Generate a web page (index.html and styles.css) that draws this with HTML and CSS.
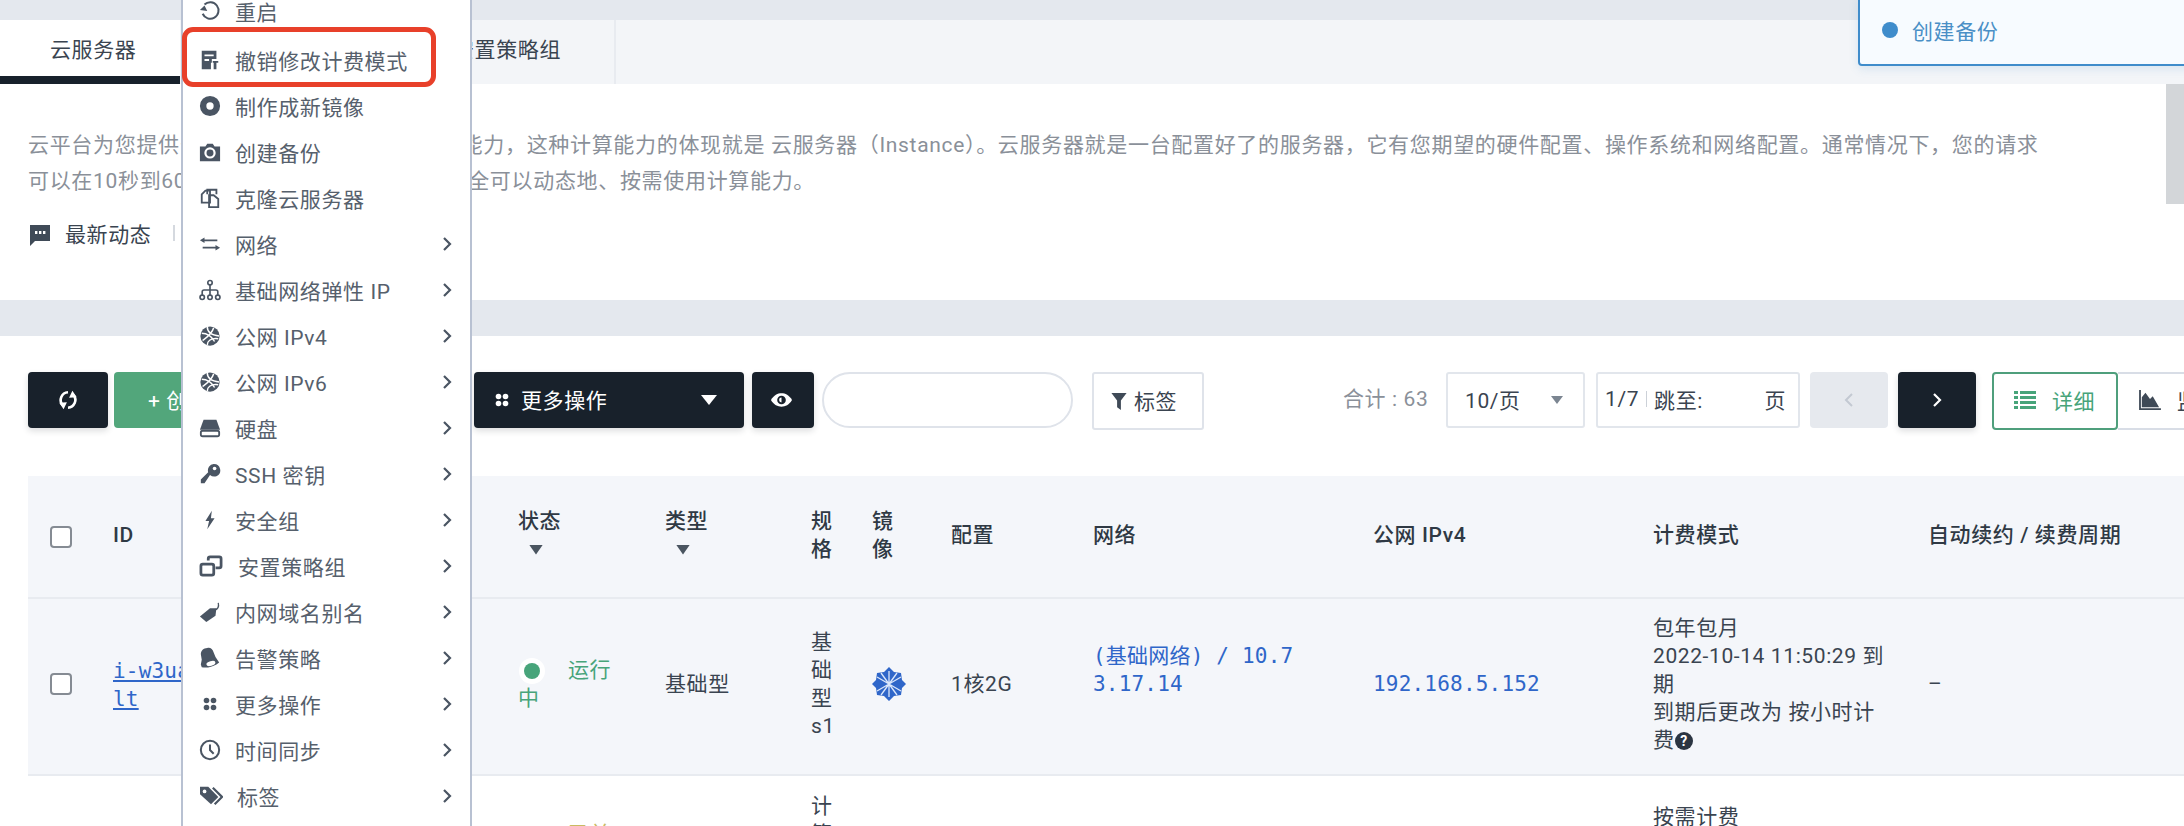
FILE: index.html
```html
<!DOCTYPE html>
<html lang="zh">
<head>
<meta charset="utf-8">
<title>云服务器</title>
<link rel="stylesheet" href="styles.css">
</head>
<body>
<svg class="defs" width="0" height="0" aria-hidden="true">
  <symbol id="i-chev" viewBox="0 0 12 16"><path d="M3 2l6 6-6 6" fill="none" stroke="currentColor" stroke-width="2.2"/></symbol>
  <symbol id="i-globe" viewBox="0 0 24 24"><circle cx="12" cy="12" r="10.5" fill="currentColor"/><path d="M3 9c5 0 10 2 14 9M9 2c0 5 3 9 13 10M4 17c4-3 10-7 12-14M9 22c0-4 3-8 12-7" fill="none" stroke="#fff" stroke-width="1.6"/></symbol>
  <symbol id="i-dots" viewBox="0 0 16 16"><g fill="currentColor"><circle cx="4" cy="4" r="3.2"/><circle cx="12" cy="4" r="3.2"/><circle cx="4" cy="12" r="3.2"/><circle cx="12" cy="12" r="3.2"/></g></symbol>
</svg>

<header class="topbar"></header>
<nav class="tabs">
  <div class="tab tab-active">云服务器</div>
  <div class="tab tab-b"></div>
  <div class="tab tab-c">安置策略组</div>
</nav>

<section class="intro">
  <p class="intro-text">云平台为您提供安全可靠、弹性可扩展的计算能力，这种计算能力的体现就是 云服务器（Instance）。云服务器就是一台配置好了的服务器，它有您期望的硬件配置、操作系统和网络配置。通常情况下，您的请求<br>可以在10秒到60秒内创建或启动实例，让您完全可以动态地、按需使用计算能力。</p>
  <div class="news">
    <svg class="news-icon" viewBox="0 0 20 22"><path d="M0 1h20v16H5l-5 5z" fill="#3f4a57"/><g fill="#fff"><rect x="5" y="7" width="2.4" height="3"/><rect x="9" y="7" width="2.4" height="3"/><rect x="13" y="7" width="2.4" height="3"/></g></svg>
    <span class="news-label">最新动态</span>
    <span class="news-sep"></span>
  </div>
  <div class="scrollbar"></div>
</section>
<div class="band"></div>

<section class="toolbar">
  <button class="btn btn-dark btn-refresh"><svg class="ic20" viewBox="0 0 20 20"><path d="M10 3A7 7 0 0 0 5 14.500M10 17a7 7 0 0 0 5-11.500" fill="none" stroke="#fff" stroke-width="2.400"/><path d="M2 12.500L9 12l-3 6.500zM18 7.500L11 8l3-6.500z" fill="#fff"/></svg></button>
  <button class="btn btn-green">+ 创建</button>
  <button class="btn btn-dark btn-more"><svg class="ic14" viewBox="0 0 16 16"><use href="#i-dots"/></svg><span class="more-label">更多操作</span><span class="caret caret-white"></span></button>
  <button class="btn btn-dark btn-eye"><svg class="ic-eye" viewBox="0 0 24 16"><path d="M1 8c3-5 7-7 11-7s8 2 11 7c-3 5-7 7-11 7S4 13 1 8z" fill="#fff"/><circle cx="12" cy="8" r="4.500" fill="#18212b"/><path d="M12 5.500a2.500 2.500 0 0 0 0 5z" fill="#fff"/></svg></button>
  <div class="search"></div>
  <button class="btn-tag"><svg class="ic-funnel" viewBox="0 0 16 20"><path d="M0 1h16l-6 8v10l-4-3V9z" fill="#3f4a57"/></svg>标签</button>
  <div class="total">合计 : 63</div>
  <div class="select">10/页<span class="caret caret-gray"></span></div>
  <div class="jump"><span>1/7</span><i class="jump-sep"></i><span class="jump-to">跳至:</span><span class="jump-page">页</span></div>
  <button class="btn btn-prev"><svg class="ic-pg" viewBox="0 0 12 16"><path d="M9 2L3 8l6 6" fill="none" stroke="#c3c9d2" stroke-width="2"/></svg></button>
  <button class="btn btn-dark btn-next"><svg class="ic-pg" viewBox="0 0 12 16"><path d="M3 2l6 6-6 6" fill="none" stroke="#fff" stroke-width="2.200"/></svg></button>
  <button class="view view-on"><svg class="ic-list" viewBox="0 0 22 18"><g fill="#47a47a"><rect width="4" height="3"/><rect x="6" width="16" height="3"/><rect y="5" width="4" height="3"/><rect x="6" y="5" width="16" height="3"/><rect y="10" width="4" height="3"/><rect x="6" y="10" width="16" height="3"/><rect y="15" width="4" height="3"/><rect x="6" y="15" width="16" height="3"/></g></svg>详细</button>
  <button class="view view-off"><svg class="ic-list" viewBox="0 0 24 22"><path d="M0 0h2v20h22v2H0z" fill="#3f4a57"/><path d="M3 19V8l4-5 5 7 3-3 7 12z" fill="#3f4a57"/></svg>监控</button>
</section>

<table class="grid">
  <colgroup>
    <col class="c-check"><col class="c-id"><col class="c-status"><col class="c-type"><col class="c-spec"><col class="c-image"><col class="c-conf"><col class="c-net"><col class="c-ip"><col class="c-bill"><col class="c-renew">
  </colgroup>
  <thead>
    <tr>
      <th class="check"><span class="box"></span></th>
      <th>ID</th>
      <th>状态<span class="sort"></span></th>
      <th>类型<span class="sort"></span></th>
      <th class="narrow">规格</th>
      <th class="narrow">镜像</th>
      <th>配置</th>
      <th>网络</th>
      <th>公网 IPv4</th>
      <th>计费模式</th>
      <th>自动续约 / 续费周期</th>
    </tr>
  </thead>
  <tbody>
    <tr class="row-a">
      <td class="check"><span class="box"></span></td>
      <td class="id"><a class="mono link id-link">i-w3uabc<br>lt</a></td>
      <td class="status"><i class="dot"></i>运行中</td>
      <td>基础型</td>
      <td class="narrow">基础型s1</td>
      <td><svg class="os" viewBox="0 0 34 34"><path d="M17 0l5 5 7 1 1 7 4 4-4 4-1 7-7 1-5 5-5-5-7-1-1-7-4-4 4-4 1-7 7-1z" fill="#2f66c9"/><path d="M17 4v26M5 10l24 14M29 10L5 24M9 6l16 22M25 6L9 28" stroke="#dbe7fb" stroke-width="1.300"/></svg></td>
      <td>1核2G</td>
      <td class="net"><span class="mono link">(基础网络) / 10.73.17.14</span></td>
      <td><span class="mono link">192.168.5.152</span></td>
      <td class="bill">包年包月<br>2022-10-14 11:50:29 到期<br>到期后更改为 按小时计费<svg class="help" viewBox="0 0 18 18"><circle cx="9" cy="9" r="9" fill="#2b3542"/><text x="9" y="14" text-anchor="middle" class="help-q">?</text></svg></td>
      <td>–</td>
    </tr>
    <tr class="row-b">
      <td class="check"></td>
      <td></td>
      <td class="status status-wait"><i class="dot dot-wait"></i>已关机</td>
      <td></td>
      <td class="narrow">计算型c1</td>
      <td></td>
      <td></td>
      <td></td>
      <td></td>
      <td class="bill">按需计费</td>
      <td></td>
    </tr>
  </tbody>
</table>

<div class="toast"><i class="toast-dot"></i>创建备份</div>

<ul class="menu">
  <li class="mi mi-first"><svg class="mi-ic" viewBox="0 0 24 24"><path d="M6 5a9 9 0 1 1-2 10" fill="none" stroke="currentColor" stroke-width="2.200"/><path d="M1 11l5-5 3 6z" fill="currentColor"/></svg><span>重启</span></li>
  <li class="mi mi-hl"><svg class="mi-ic" viewBox="0 0 24 24"><path d="M3 2h16v9h-5v4h-1v7H3zM6 6v2h10V6zm0 5v2h5v-2z" fill="currentColor" fill-rule="evenodd"/><path d="M15 13h6v2h-2v7h-3v-7h-1z" fill="currentColor"/></svg><span>撤销修改计费模式</span></li>
  <li class="mi"><svg class="mi-ic" viewBox="0 0 24 24"><circle cx="12" cy="12" r="7.500" fill="none" stroke="currentColor" stroke-width="7"/></svg><span>制作成新镜像</span></li>
  <li class="mi"><svg class="mi-ic" viewBox="0 0 24 24"><path d="M1 6h6l2-3h6l2 3h6v16H1z" fill="currentColor"/><circle cx="12" cy="13" r="5" fill="none" stroke="#fff" stroke-width="2.400"/></svg><span>创建备份</span></li>
  <li class="mi"><svg class="mi-ic" viewBox="0 0 24 24"><path d="M9 8V3h6l4 0v5M3 8l4-4h5v13H3zM11 9h5l5 4v9H11z" fill="#fff" stroke="currentColor" stroke-width="2"/></svg><span>克隆云服务器</span></li>
  <li class="mi"><svg class="mi-ic" viewBox="0 0 24 24"><path d="M6 5L1 8l5 3V9h14V7H6zM18 13l5 3-5 3v-2H4v-2h14z" fill="currentColor"/></svg><span>网络</span><svg class="chev"><use href="#i-chev"/></svg></li>
  <li class="mi"><svg class="mi-ic" viewBox="0 0 24 24"><g fill="none" stroke="currentColor" stroke-width="1.800"><circle cx="12" cy="4" r="2.400"/><circle cx="3.500" cy="20" r="2.400"/><circle cx="12" cy="20" r="2.400"/><circle cx="20.500" cy="20" r="2.400"/><path d="M12 6.500v11M3.500 17.500V14q0-2 2-2h13q2 0 2 2v3.500"/></g></svg><span>基础网络弹性 IP</span><svg class="chev"><use href="#i-chev"/></svg></li>
  <li class="mi"><svg class="mi-ic" viewBox="0 0 24 24"><use href="#i-globe"/></svg><span>公网 IPv4</span><svg class="chev"><use href="#i-chev"/></svg></li>
  <li class="mi"><svg class="mi-ic" viewBox="0 0 24 24"><use href="#i-globe"/></svg><span>公网 IPv6</span><svg class="chev"><use href="#i-chev"/></svg></li>
  <li class="mi"><svg class="mi-ic" viewBox="0 0 24 24"><path d="M5 3h14l4 11H1z" fill="currentColor"/><rect x="2" y="15" width="20" height="6" rx="2" fill="none" stroke="currentColor" stroke-width="2"/></svg><span>硬盘</span><svg class="chev"><use href="#i-chev"/></svg></li>
  <li class="mi"><svg class="mi-ic" viewBox="0 0 24 24"><path d="M16 1a7 7 0 0 1 3 13.400 7 7 0 0 1-7-1.400L6 22H2v-4l8-8a7 7 0 0 1 6-9z" fill="currentColor"/><circle cx="17" cy="6" r="2" fill="#fff"/></svg><span>SSH 密钥</span><svg class="chev"><use href="#i-chev"/></svg></li>
  <li class="mi"><svg class="mi-ic" viewBox="0 0 24 24"><path d="M14 2L7 13h4l-2 9 8-12h-4z" fill="currentColor"/></svg><span>安全组</span><svg class="chev"><use href="#i-chev"/></svg></li>
  <li class="mi mi-wide"><svg class="mi-ic mi-ic-wide" viewBox="0 0 26 24"><g fill="none" stroke="currentColor" stroke-width="3"><rect x="2" y="10" width="14" height="12" rx="2"/><path d="M10 6V4a2 2 0 0 1 2-2h10a2 2 0 0 1 2 2v8a2 2 0 0 1-2 2h-4"/></g></svg><span>安置策略组</span><svg class="chev"><use href="#i-chev"/></svg></li>
  <li class="mi"><svg class="mi-ic" viewBox="0 0 24 24"><path d="M1 17L12 8h7l-1 8-10 7z" fill="currentColor"/><path d="M17 10c3-1 5-4 4-8" fill="none" stroke="currentColor" stroke-width="1.400"/></svg><span>内网域名别名</span><svg class="chev"><use href="#i-chev"/></svg></li>
  <li class="mi"><svg class="mi-ic" viewBox="0 0 24 24"><path d="M9 1c3-1 6 1 7 5l2 5 4 6-3 2c-5 3-11 4-16 3L2 19l1-5-1-6c0-4 3-7 7-7z" fill="currentColor"/><ellipse cx="13" cy="18" rx="5" ry="2.500" fill="#fff" transform="rotate(-15 13 18)"/></svg><span>告警策略</span><svg class="chev"><use href="#i-chev"/></svg></li>
  <li class="mi"><svg class="mi-ic mi-ic-dots" viewBox="0 0 16 16"><use href="#i-dots"/></svg><span>更多操作</span><svg class="chev"><use href="#i-chev"/></svg></li>
  <li class="mi"><svg class="mi-ic" viewBox="0 0 24 24"><circle cx="12" cy="12" r="10" fill="none" stroke="currentColor" stroke-width="2.200"/><path d="M12 6v6l4 4" fill="none" stroke="currentColor" stroke-width="2.200"/></svg><span>时间同步</span><svg class="chev"><use href="#i-chev"/></svg></li>
  <li class="mi mi-wide2"><svg class="mi-ic mi-ic-wide" viewBox="0 0 26 24"><path d="M1 2h9l11 11-8 8L1 10z" fill="currentColor"/><circle cx="6" cy="7" r="2" fill="#fff"/><path d="M15 3l10 10-8 8" fill="none" stroke="currentColor" stroke-width="2.400"/></svg><span>标签</span><svg class="chev"><use href="#i-chev"/></svg></li>
</ul>
</body>
</html>
```

FILE: styles.css
```css
*, *::before, *::after { box-sizing: border-box; }
html, body { margin: 0; height: 826px; overflow: hidden; background: #fff; }
body {
  position: relative;
  width: 2184px;
  font-family: Roboto, "Noto Sans CJK SC", sans-serif;
  font-size: 21px;
  letter-spacing: 0.6px;
  color: #3a4450;
}
button { font: inherit; letter-spacing: inherit; margin: 0; padding: 0; cursor: pointer; }
.defs { position: absolute; }

.topbar { height: 20px; background: #e4e8ee; }
.tabs { display: flex; height: 64px; background: #f3f5f8; }
.tab { height: 64px; line-height: 60px; }
.tab-active { width: 180px; padding-left: 50px; background: #fff; border-bottom: 8px solid #18212b; }
.tab-b { width: 256px; }
.tab-c { width: 180px; padding-left: 17px; white-space: nowrap; border-right: 2px solid #e8ebf0; }

.intro { position: relative; height: 216px; padding: 43px 0 0 28px; background: #fff; color: #8a9099; }
.intro-text { margin: 0; line-height: 36px; white-space: nowrap; letter-spacing: 0.68px; }
.news { display: flex; align-items: center; height: 30px; margin-top: 19px; color: #3a4450; }
.news-icon { width: 20px; height: 22px; margin: 3px 15px 0 2px; }
.news-sep { width: 2px; height: 16px; margin-left: 22px; background: #d5d9df; }
.scrollbar { position: absolute; top: 0; right: 0; width: 18px; height: 120px; background: #d3d6d9; }
.band { height: 36px; background: #e4e8ee; }

.toolbar { display: flex; height: 56px; margin: 36px 0 0 28px; }
.btn { height: 56px; border: 0; border-radius: 4px; flex: none; display: flex; align-items: center; justify-content: center; }
.btn-dark { background: #18212b; color: #fff; box-shadow: 0 3px 6px rgba(24,33,43,.15); }
.btn-refresh { width: 80px; }
.ic20 { width: 22px; height: 22px; }
.btn-green { width: 150px; margin-left: 6px; background: #52a67b; color: #fff; justify-content: flex-start; padding: 0 0 3px 34px; }
.btn-more { width: 270px; margin-left: 210px; justify-content: flex-start; padding-left: 21px; }
.ic14 { width: 14px; height: 14px; }
.more-label { margin-left: 12px; flex: 1; text-align: left; padding-bottom: 3px; }
.caret { width: 0; height: 0; border-left: 8px solid transparent; border-right: 8px solid transparent; }
.caret-white { border-top: 10px solid #fff; margin-right: 27px; }
.btn-eye { width: 62px; margin-left: 8px; padding-right: 4px; }
.ic-eye { width: 23px; height: 16px; }
.search { flex: none; width: 251px; height: 56px; margin-left: 8px; border: 2px solid #dfe3ea; border-radius: 28px; }
.btn-tag { flex: none; width: 112px; height: 58px; margin-left: 19px; padding: 0 0 2px 16px; background: #fff; border: 2px solid #dfe3ea; border-radius: 3px; color: #3a4450; display: flex; align-items: center; }
.ic-funnel { width: 18px; height: 19px; margin: 2px 6px 0 0; }
.total { flex: none; width: 103px; margin-left: 139px; white-space: nowrap; line-height: 54px; color: #8a9099; }
.select { flex: none; width: 139px; height: 56px; border: 2px solid #e2e6ec; border-radius: 3px; display: flex; align-items: center; justify-content: space-between; padding: 0 20px 3px 17px; color: #3a4450; }
.caret-gray { border-left-width: 6px; border-right-width: 6px; border-top: 8px solid #7b8591; margin-top: 3px; }
.jump { flex: none; width: 204px; height: 56px; margin-left: 11px; border: 2px solid #e2e6ec; border-radius: 3px; display: flex; align-items: center; padding: 0 8px 3px 7px; color: #3a4450; white-space: nowrap; }
.jump-sep { width: 1px; height: 16px; margin: 0 7px; background: #ccd1d8; }
.jump-page { margin-left: auto; margin-right: 0; padding-right: 4px; }
.btn-prev { width: 78px; margin-left: 10px; background: #e6e9ee; }
.btn-next { width: 78px; margin-left: 10px; }
.ic-pg { width: 12px; height: 16px; }
.view { flex: none; height: 58px; display: flex; align-items: center; background: #fff; white-space: nowrap; padding-bottom: 2px; }
.view-on { width: 126px; margin-left: 16px; border: 2px solid #4f9f7c; border-radius: 4px; color: #47a47a; justify-content: flex-start; padding-left: 20px; }
.view-off { width: 126px; border: 2px solid #d8dde6; border-left: 0; padding-left: 21px; justify-content: flex-start; color: #3a4450; }
.ic-list { width: 22px; height: 20px; margin-right: 16px; flex: none; }

.grid { table-layout: fixed; width: 2340px; margin: 48px 0 0 28px; border-collapse: collapse; }
.c-check { width: 85px; } .c-id { width: 405px; } .c-status { width: 147px; } .c-type { width: 146px; }
.c-spec { width: 61px; } .c-image { width: 79px; } .c-conf { width: 142px; } .c-net { width: 280px; }
.c-ip { width: 280px; } .c-bill { width: 275px; } .c-renew { width: 440px; }
.grid th, .grid td { padding: 0 24px 0 0; text-align: left; line-height: 28px; vertical-align: middle; }
.grid th { height: 122px; padding-bottom: 4px; font-weight: 500; background: #f4f6fa; border-bottom: 2px solid #e8ebf0; color: #2f3944; }
.grid td.check, .grid th.check { padding-left: 22px; padding-right: 0; padding-bottom: 0; }
.grid .narrow { padding-right: 30px; word-break: break-all; }
.grid th.narrow:nth-child(6) { padding-right: 47px; }
.row-a td { height: 177px; background: #f4f6fa; border-bottom: 2px solid #e8ebf0; word-break: break-all; }
.grid .row-a td { padding-bottom: 6px; }
.grid .row-a .id { padding-bottom: 3px; }
.grid .row-a .net { padding-bottom: 34px; padding-right: 75px; }
.row-b td { height: 144px; vertical-align: top; }
.grid .row-b .narrow { padding-top: 16px; }
.grid .row-b .bill { padding-top: 27px; }
.grid .row-b .status { padding-top: 44px; }
.grid .bill { padding-right: 35px; }
.grid .status { padding-right: 40px; }
.box { display: block; width: 22px; height: 22px; border: 2px solid #858b93; border-radius: 4px; background: #fff; }
.sort { display: block; height: 28px; padding: 10px 0 0 11px; }
.sort::after { content: ""; display: block; width: 14px; height: 10px; clip-path: polygon(0 0, 100% 0, 50% 100%); background: #4a5560; }
.mono { font-family: "DejaVu Sans Mono", "Noto Sans CJK SC", monospace; letter-spacing: 0.2px; }
.link { color: #2f66c9; }
.id-link { text-decoration: underline; }
.status { color: #47a47a; }
.dot { display: inline-block; width: 16px; height: 16px; margin: 0 28px 0 6px; border-radius: 50%; background: #47a47a; box-shadow: 0 0 0 5px #fff; vertical-align: -2px; }
.status-wait { color: #c9bb62; }
.dot-wait { background: #e0cf6a; }
.os { display: block; width: 34px; height: 34px; }
.help { width: 18px; height: 18px; vertical-align: -3px; }
.help-q { fill: #fff; font-size: 14px; font-weight: 700; }

.toast { position: absolute; top: -4px; left: 1858px; width: 340px; height: 70px; padding: 0 0 2px 52px; display: flex; align-items: center; background: #f7fbff; border: 2px solid #3f8ccb; border-radius: 4px; color: #4a8fc6; box-shadow: 0 3px 10px rgba(63,140,203,.15); }
.toast-dot { position: absolute; left: 22px; top: 24px; width: 16px; height: 16px; border-radius: 50%; background: #3f8ccb; }

.menu { position: absolute; top: -12px; bottom: 0; left: 181px; width: 291px; margin: 0; padding: 0; list-style: none; background: #fff; border-left: 2px solid #b8c1d2; border-right: 2px solid #b8c1d2; color: #56606c; }
.mi { display: flex; align-items: center; height: 46px; padding-left: 52px; position: relative; white-space: nowrap; }
.mi-first { margin-bottom: 3px; }
.mi-ic { position: absolute; left: 16px; top: 12px; width: 22px; height: 22px; color: #4a5563; }
.mi-ic-wide { left: 16px; width: 24px; }
.mi-ic-dots { left: 20px; top: 16px; width: 14px; height: 14px; }
.mi-wide { padding-left: 55px; }
.mi-wide2 { padding-left: 54px; }
.chev { position: absolute; right: 17px; top: 15px; width: 12px; height: 16px; color: #4a5563; }
.mi-hl::after { content: ""; position: absolute; left: -1px; top: -10px; width: 254px; height: 60px; border: 5px solid #e8402a; border-radius: 11px; }
```
